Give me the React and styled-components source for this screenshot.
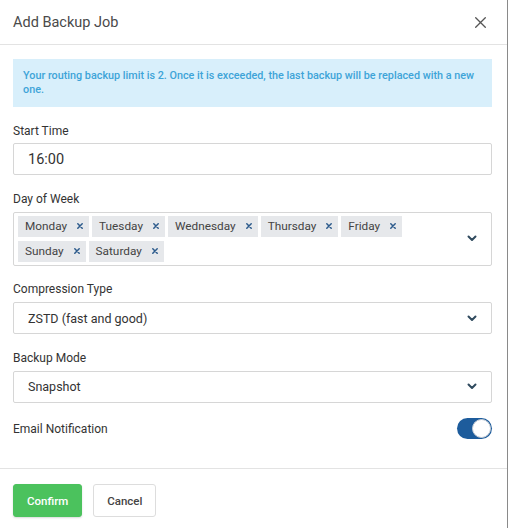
import React from 'react';
import styled, { createGlobalStyle } from 'styled-components';

const GlobalStyle = createGlobalStyle`
  html, body {
    margin: 0;
    padding: 0;
    background: #ffffff;
  }
  body {
    font-family: Roboto, "Liberation Sans", Arial, sans-serif;
    color: #333;
  }
`;

const days = ['Monday', 'Tuesday', 'Wednesday', 'Thursday', 'Friday', 'Sunday', 'Saturday'];

const Chevron = () => (
  <svg width="10" height="7" viewBox="0 0 10 7">
    <path d="M1.5 1.5 L5 5 L8.5 1.5" fill="none" stroke="#2f4a5e" strokeWidth="2" strokeLinecap="round" strokeLinejoin="round" />
  </svg>
);

const TagX = () => (
  <svg width="6" height="6" viewBox="0 0 6 6">
    <path d="M0.8 0.8 L5.2 5.2 M5.2 0.8 L0.8 5.2" stroke="#2d5b8c" strokeWidth="1.5" strokeLinecap="round" />
  </svg>
);

export default function App() {
  return (
    <>
      <GlobalStyle />
      <Modal>
        <Header>
          <Title>Add Backup Job</Title>
          <Close aria-label="close">
            <svg width="11" height="11" viewBox="0 0 11 11">
              <path d="M0.7 0.7 L10.3 10.3 M10.3 0.7 L0.7 10.3" stroke="#555" strokeWidth="1.3" strokeLinecap="round" />
            </svg>
          </Close>
        </Header>
        <Body>
          <Alert>
            Your routing backup limit is 2. Once it is exceeded, the last backup will be replaced with a new one.
          </Alert>

          <Field>
            <Label>Start Time</Label>
            <Input>16:00</Input>
          </Field>

          <Field>
            <Label>Day of Week</Label>
            <MultiSelect>
              <Tags>
                {days.map((d) => (
                  <Tag key={d}>
                    {d}
                    <TagX />
                  </Tag>
                ))}
              </Tags>
              <Caret>
                <Chevron />
              </Caret>
            </MultiSelect>
          </Field>

          <Field>
            <Label>Compression Type</Label>
            <Select>
              <span>ZSTD (fast and good)</span>
              <Chevron />
            </Select>
          </Field>

          <Field>
            <Label>Backup Mode</Label>
            <Select>
              <span>Snapshot</span>
              <Chevron />
            </Select>
          </Field>

          <SwitchRow>
            <Label as="span">Email Notification</Label>
            <Toggle $on />
          </SwitchRow>
        </Body>
        <Footer>
          <Button $primary>Confirm</Button>
          <Button>Cancel</Button>
        </Footer>
      </Modal>
    </>
  );
}

const Modal = styled.div`
  width: 508px;
  height: 528px;
  border-right: 1px solid #8a8a8a;
  background: #fff;
  box-sizing: border-box;
  overflow: hidden;
`;

const Header = styled.div`
  height: 44px;
  display: flex;
  align-items: center;
  justify-content: space-between;
  padding: 0 21px 0 13px;
  border-bottom: 1px solid #e3e3e3;
`;

const Title = styled.h1`
  margin: 0;
  font-size: 14.5px;
  font-weight: 400;
  color: #4a4a4a;
`;

const Close = styled.button`
  border: 0;
  background: none;
  padding: 0;
  display: flex;
  cursor: pointer;
`;

const Body = styled.div`
  padding: 14px 15px 29px 13px;
  display: flex;
  flex-direction: column;
  gap: 15.7px;
`;

const Alert = styled.div`
  background: #d8effb;
  color: #3ea4d8;
  font-size: 10.8px;
  font-weight: 500;
  line-height: 14px;
  padding: 10px;
  height: 48px;
  box-sizing: border-box;
`;

const Field = styled.div`
  display: flex;
  flex-direction: column;
  gap: 4.7px;
`;

const Label = styled.label`
  font-size: 12px;
  line-height: 16px;
  color: #333;
`;

const Input = styled.div`
  height: 32px;
  box-sizing: border-box;
  border: 1px solid #d6d6d6;
  border-radius: 2px;
  display: flex;
  align-items: center;
  padding: 0 14px;
  font-size: 14.5px;
  color: #333;
`;

const MultiSelect = styled.div`
  min-height: 54px;
  box-sizing: border-box;
  border: 1px solid #d6d6d6;
  border-radius: 2px;
  display: flex;
  align-items: center;
  padding: 3px 14px 3px 4px;
`;

const Tags = styled.div`
  flex: 1;
  display: flex;
  flex-wrap: wrap;
  gap: 4px 3px;
`;

const Tag = styled.span`
  display: inline-flex;
  align-items: center;
  gap: 10px;
  height: 21px;
  padding: 0 6px 0 7px;
  background: #e6e8eb;
  font-size: 11.8px;
  color: #444;
`;

const Caret = styled.span`
  display: flex;
`;

const Select = styled.div`
  height: 32px;
  box-sizing: border-box;
  border: 1px solid #d6d6d6;
  border-radius: 2px;
  display: flex;
  align-items: center;
  justify-content: space-between;
  padding: 0 14px 0 14px;
  font-size: 12.5px;
  color: #333;
`;

const SwitchRow = styled.div`
  display: flex;
  align-items: center;
  justify-content: space-between;
  height: 21px;
`;

const Toggle = styled.span`
  position: relative;
  width: 35px;
  height: 21px;
  border-radius: 11px;
  background: ${({ $on }) => ($on ? '#1d5c9c' : '#ccc')};
  box-sizing: border-box;
  &::after {
    content: '';
    position: absolute;
    top: 1px;
    left: ${({ $on }) => ($on ? '15px' : '1px')};
    width: 19px;
    height: 19px;
    box-sizing: border-box;
    border-radius: 50%;
    background: #fff;
    border: 1px solid #c8ced6;
  }
`;

const Footer = styled.div`
  border-top: 1px solid #e3e3e3;
  padding: 15px 13px;
  display: flex;
  gap: 11px;
`;

const Button = styled.button`
  height: 33px;
  padding: 0 13px;
  border-radius: 3px;
  font-family: inherit;
  font-size: 11.5px;
  font-weight: 500;
  cursor: pointer;
  border: 1px solid ${({ $primary }) => ($primary ? '#4bc25d' : '#ddd')};
  background: ${({ $primary }) => ($primary ? '#4bc25d' : '#fff')};
  color: ${({ $primary }) => ($primary ? '#fff' : '#444')};
  box-shadow: ${({ $primary }) => ($primary ? '0 1px 2px rgba(0,0,0,0.15)' : 'none')};
`;
